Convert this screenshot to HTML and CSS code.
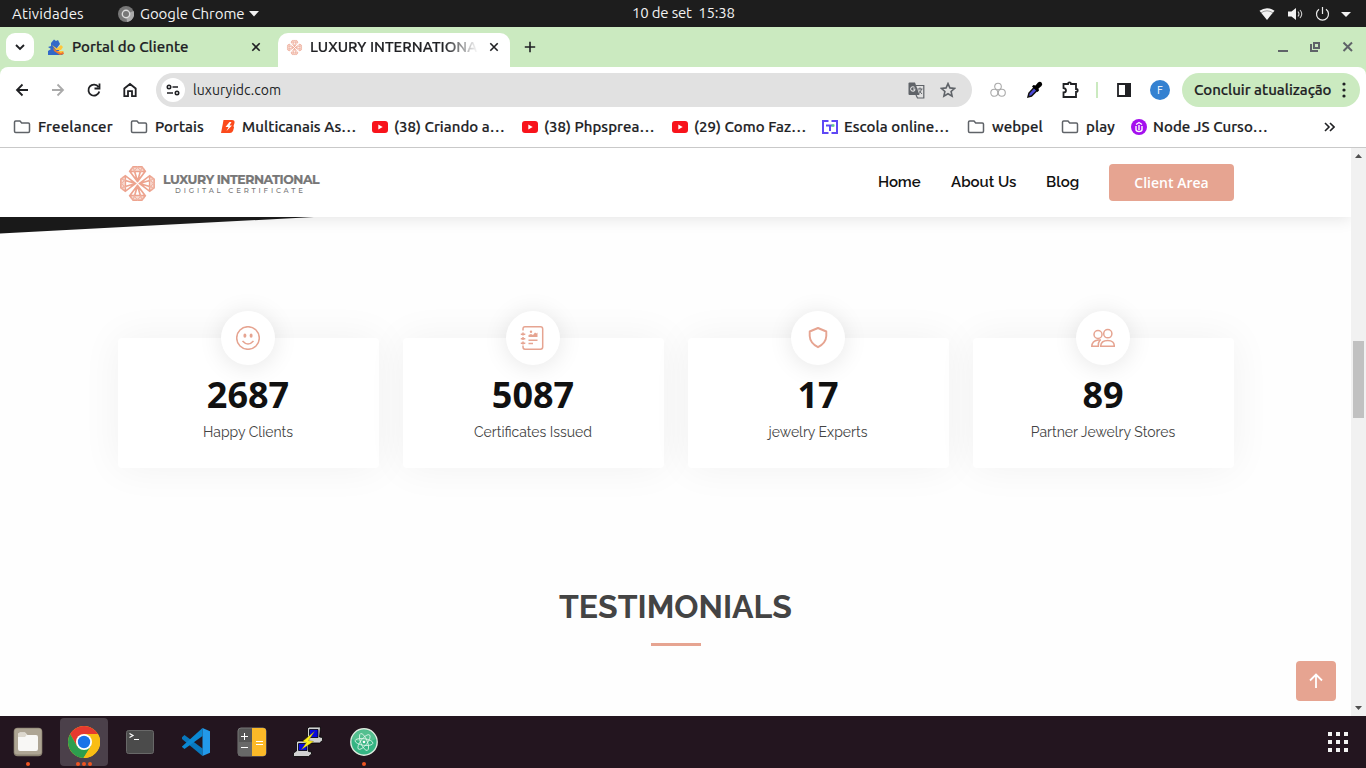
FILE: index.html
```
<!DOCTYPE html>
<html lang="pt-BR">
<head>
<meta charset="utf-8">
<title>Luxury International</title>
<link rel="stylesheet" href="styles.css">
</head>
<body>
<svg class="defs" width="0" height="0">
  <defs>
    <symbol id="folder" viewBox="0 0 18 14"><path d="M1.500 2.200Q1.500 1 2.700 1H7l1.700 2h6.600Q16.500 3 16.500 4.200V11.300Q16.500 12.500 15.300 12.500H2.700Q1.500 12.500 1.500 11.300Z" fill="none" stroke="#5f6368" stroke-width="1.500"/></symbol>
    <symbol id="yt" viewBox="0 0 16 12"><rect width="16" height="12" rx="3" fill="#f8131b"/><path d="M6.300 3.500v5l4.400-2.500z" fill="#fff"/></symbol>
    <symbol id="gem" viewBox="0 0 20 17"><path d="M5.500 1H14.500L18 5.500 10 16 2 5.500ZM2 5.500H18M7 5.500 10 16 13 5.500" fill="none" stroke="#eda38e" stroke-width="1.700"/><path d="M5.500 1 6.500 5.500 10 1 13.500 5.500 14.500 1M3 3.200h14" fill="none" stroke="#f0b5a4" stroke-width="1.100"/></symbol>
    <symbol id="flower" viewBox="0 0 40 40"><use href="#gem" x="10" y="2" width="20" height="17"/><use href="#gem" x="10" y="2" width="20" height="17" transform="rotate(90 20 20)"/><use href="#gem" x="10" y="2" width="20" height="17" transform="rotate(180 20 20)"/><use href="#gem" x="10" y="2" width="20" height="17" transform="rotate(270 20 20)"/></symbol>
    <symbol id="close" viewBox="0 0 10 10"><path d="M1.300 1.300 8.700 8.700M8.700 1.300 1.300 8.700" fill="none" stroke="currentColor" stroke-width="1.600"/></symbol>
  </defs>
</svg>

<header class="topbar">
  <span class="activities">Atividades</span>
  <svg class="app-mark" width="16" height="16" viewBox="0 0 16 16"><circle cx="8" cy="8" r="8" fill="#777"/><path d="M8 8 15.500 5A8 8 0 0 1 9 16Z" fill="#aaa"/><circle cx="8" cy="8" r="4.400" fill="#ddd"/><circle cx="8" cy="8" r="3" fill="#777"/></svg>
  <span class="app-name">Google Chrome</span>
  <svg class="app-caret" width="10" height="6" viewBox="0 0 10 6"><path d="M0 0h10L5 5.500z" fill="#f2f2f2"/></svg>
  <span class="clock">10 de set&nbsp; 15:38</span>
  <svg class="sys" width="92" height="16" viewBox="0 0 92 16"><path d="M.5 4.800Q8-.5 15.500 4.800L8 14Z" fill="#f2f2f2"/><path d="M2 6.800Q8 2.800 14 6.800" stroke="#888" fill="none" stroke-width=".8"/><path d="M29 5.500h3.500L37 2v12l-4.500-3.500h-3.500z" fill="#f2f2f2"/><path d="M39 5.500q2 2.500 0 5M41 4q3.500 4 0 8" fill="none" stroke="#ccc" stroke-width="1.100"/><path d="M60 3.200A6 6 0 1 0 67 3.200M63.500 1v7" fill="none" stroke="#eee" stroke-width="1.200"/><path d="M82 6h10l-5 5z" fill="#f2f2f2"/></svg>
</header>

<div class="tabs">
  <div class="tab-search"><svg width="10" height="7" viewBox="0 0 10 7"><path d="M1 1l4 4 4-4" fill="none" stroke="#202124" stroke-width="1.900"/></svg></div>
  <div class="tab tab-idle">
    <svg width="18" height="17" viewBox="0 0 18 17"><path d="M4 4 7 .5l2 1.500 2-1 2 4-3 4 6 7H1v-4l3-2-3-2 3-1z" fill="#3269c8"/><path d="M5 6l5 3.500 4-3.500 2 2-2 3H9z" fill="#ffc63b"/><path d="M6 9l4 3h6l1 3-4 1-6-4z" fill="#ee772d"/><path d="M10 12h7l-3 2z" fill="#ffc63b"/></svg>
    <span class="tab-title">Portal do Cliente</span>
    <svg class="x" width="10" height="10"><use href="#close"/></svg>
  </div>
  <div class="tab tab-active">
    <svg width="17" height="17"><use href="#flower"/></svg>
    <span class="tab-title">LUXURY INTERNATIONAL</span>
    <svg class="x" width="10" height="10"><use href="#close"/></svg>
  </div>
  <svg class="plus" width="12" height="12" viewBox="0 0 12 12"><path d="M6 .8v10.400M.8 6h10.400" stroke="#202124" stroke-width="1.600"/></svg>
  <svg class="winctl" width="78" height="14" viewBox="0 0 78 14"><g fill="none" stroke="#5f6368" stroke-width="2"><path d="M1 11h10M37 3h5v5h-5zM34 4v7h7"/><path d="M66.500 2.500l8.500 8.500M75 2.500l-8.500 8.500"/></g></svg>
</div>

<div class="toolbar">
  <svg class="nav" width="124" height="18" viewBox="0 0 124 18"><g fill="none" stroke="#202124" stroke-width="1.800"><path d="M14 9H3M8.500 3.500 3 9 8.500 14.500"/><path d="M38 9h11M43.500 3.500 49 9l-5.500 5.500" stroke="#aaa"/><path d="M84.500 6A5.500 5.500 0 1 0 85.300 10.500M85.500 2.500v5h-5"/><path d="M110.300 7.500 116 3l5.700 4.500V15.200h-3.700v-5h-4v5h-3.700z"/></g></svg>
  <div class="address">
    <span class="site"><svg width="14" height="12" viewBox="0 0 14 12"><g fill="none" stroke="#202124" stroke-width="1.600"><circle cx="3" cy="3" r="1.700"/><path d="M6.500 3H12M1 9h6"/><circle cx="11" cy="9" r="1.700"/></g></svg></span>
    <span class="url">luxuryidc.com</span>
    <svg class="translate" width="17" height="17" viewBox="0 0 17 17"><path d="M1.500 .5H7L11.500 13H1.500Q.5 13 .5 12V1.500Q.5 .5 1.500 .5Z" fill="#5f6368"/><path d="M8 3.500H15.800V16H9.500L8 13" fill="none" stroke="#5f6368" stroke-width="1.200"/><path d="M6.500 5.500A2.200 2.200 0 1 0 6.800 8V7H5" fill="none" stroke="#e1e1e1" stroke-width="1.100"/><path d="M9.500 7H14.500M12 5.500V7M13.500 7Q13 10 10.500 12M11 8.500l3 3.500" fill="none" stroke="#5f6368"/></svg>
    <svg width="16" height="16" viewBox="0 0 16 16"><path d="M8 1.600l1.900 4.300 4.700.5-3.500 3.100 1 4.700L8 11.800l-4.100 2.400 1-4.700L1.400 6.400l4.700-.5z" fill="none" stroke="#5f6368" stroke-width="1.600"/></svg>
  </div>
  <svg class="ext" width="180" height="20" viewBox="0 0 180 20"><g fill="none" stroke="#aaa" stroke-width="1.100"><circle cx="8" cy="6.500" r="3.300"/><circle cx="4.300" cy="12.800" r="3.500"/><circle cx="11.800" cy="12.800" r="3.500"/></g><path d="M38 17l1-4 5.500-6 3 3-6 6z" fill="#4b49d8" stroke="#111" stroke-width="1.500"/><path d="M43.500 5l2 .5 2.500-3q2-1.500 3.500 0t0 3.500l-3 2.500.5 2-1.500 1.500-5.500-5.500z" fill="#000"/><path d="M73.500 4H78q0-1.700 1.500-1.700T81 4h5v5q1.700 0 1.700 1.500T86 12v5H73.500v-4.500q2.500 0 2.500-2T73.500 8z" fill="none" stroke="#202124" stroke-width="1.800"/><path d="M107 2v16" stroke="#cbeac0" stroke-width="2"/><path d="M128 4h12v12h-12z" fill="none" stroke="#202124" stroke-width="1.800"/><path d="M135 3h6v14h-6z" fill="#202124"/><circle cx="170" cy="10" r="10" fill="#3481d1"/></svg>
  <span class="avatar-letter">F</span>
  <div class="update"><span>Concluir atualização</span><svg width="4" height="16" viewBox="0 0 4 16"><g fill="#202124"><circle cx="2" cy="2" r="1.600"/><circle cx="2" cy="8" r="1.600"/><circle cx="2" cy="14" r="1.600"/></g></svg></div>
</div>

<nav class="bookmarks">
  <div class="bm w117"><svg width="18" height="14"><use href="#folder"/></svg><span class="b1">Freelancer</span></div>
  <div class="bm w90"><svg width="18" height="14"><use href="#folder"/></svg><span>Portais</span></div>
  <div class="bm w151"><svg width="15" height="15" viewBox="0 0 15 15"><path d="M2.500 1H11Q14 1 13.500 4L12.500 7 13 8.500 12 12Q11 14 9 14H0l1-5 .8-4z" fill="#fb4a1c"/><path d="M8.500 3 4.500 8h3l-2 4 5.500-5.500H8.500l2-3.500z" fill="#fff"/></svg><span>Multicanais As…</span></div>
  <div class="bm w150"><svg width="16" height="12"><use href="#yt"/></svg><span>(38) Criando a…</span></div>
  <div class="bm w150"><svg width="16" height="12"><use href="#yt"/></svg><span>(38) Phpsprea…</span></div>
  <div class="bm w150"><svg width="16" height="12"><use href="#yt"/></svg><span>(29) Como Faz…</span></div>
  <div class="bm w145"><svg width="16" height="14" viewBox="0 0 16 14"><path d="M6.500 1H1v12h5.500M9.500 1H15v12H9.500" fill="none" stroke="#5f48f5" stroke-width="2"/><path d="M4 5.500h8M8 5v6" stroke="#5f48f5" stroke-width="2"/><path d="M9.500 4.500h3v2h-3z" fill="#58d681"/></svg><span>Escola online…</span></div>
  <div class="bm w94"><svg width="18" height="14"><use href="#folder"/></svg><span>webpel</span></div>
  <div class="bm w70"><svg width="18" height="14"><use href="#folder"/></svg><span>play</span></div>
  <div class="bm w194"><svg width="16" height="16" viewBox="0 0 16 16"><circle cx="8" cy="8" r="8" fill="#a410ee"/><path d="M5 7v3.500q0 2 3 2t3-2V7M8 11V6M5 5.500 8 3.500l3 2" fill="none" stroke="#fff" stroke-width="1.400"/></svg><span>Node JS Curso…</span></div>
  <svg width="11" height="10" viewBox="0 0 11 10"><path d="M1 1l4 4-4 4M6 1l4 4-4 4" fill="none" stroke="#202124" stroke-width="1.600"/></svg>
</nav>

<div class="view">
  <div class="page">
    <div class="site-header">
      <svg class="logo-mark" width="39" height="39"><use href="#flower"/></svg>
      <div class="logo-text"><span class="brand">LUXURY INTERNATIONAL</span><span class="sub">DIGITAL CERTIFICATE</span></div>
      <nav class="menu"><a class="m1">Home</a><a class="m2">About Us</a><a class="m3">Blog</a></nav>
      <a class="client">Client Area</a>
    </div>
    <svg class="wedge" width="1351" height="17" viewBox="0 0 1351 17"><path d="M0 0H314L0 16.500Z" fill="#191919"/></svg>
    <main class="counts">
      <div class="card"><div class="disc"><svg width="24" height="24" viewBox="0 0 24 24"><circle cx="12" cy="12" r="11.300" fill="none" stroke="#e6a491" stroke-width="1.500"/><ellipse cx="8.900" cy="9.700" rx="1.500" ry="2.100" fill="#e6a491"/><ellipse cx="15.100" cy="9.700" rx="1.500" ry="2.100" fill="#e6a491"/><path d="M6.500 15q5.500 6 11 0" fill="none" stroke="#e6a491" stroke-width="1.500"/></svg></div><strong>2687</strong><span>Happy Clients</span></div>
      <div class="card"><div class="disc"><svg class="book" width="24" height="24" viewBox="0 0 24 24"><g fill="none" stroke="#e6a491" stroke-width="1.500"><path d="M3 4.500V3Q3 .8 5 .8H20.500Q22.700 .8 22.700 3V21Q22.700 23.200 20.500 23.200H5Q3 23.200 3 21V19.500M3 6.500v3M3 11v3M3 15.500v3M.8 8.300h4.500M.8 12.800h4.500M.8 17.300h4.500"/><path d="M8.500 14.200h9M8.500 17.500h4.500"/></g><path d="M8.500 11V9l2.500-1 2 1 2-2.500 1.500 1 1-1V11z" fill="#e6a491"/><circle cx="11" cy="5.700" r="1.200" fill="#e6a491"/></svg></div><strong>5087</strong><span>Certificates Issued</span></div>
      <div class="card"><div class="disc"><svg width="24" height="24" viewBox="0 0 24 24"><path d="M12 2 20.300 5.500V10Q20 17 12 21.200 4 17 3.700 10V5.500Z" fill="none" stroke="#e6a491" stroke-width="1.900" stroke-linejoin="round"/></svg></div><strong>17</strong><span>jewelry Experts</span></div>
      <div class="card"><div class="disc"><svg width="24" height="24" viewBox="0 0 24 24"><g fill="none" stroke="#e6a491" stroke-width="1.500"><circle cx="7" cy="8.500" r="4"/><circle cx="16.800" cy="7.700" r="4.100"/><path d="M9.700 20.300V20Q10 14.500 16.700 14.500T23.300 20.300Z"/><path d="M10 14H7Q1 15 .8 20.300H7.300Q7 16.500 9 14"/></g></svg></div><strong>89</strong><span>Partner Jewelry Stores</span></div>
    </main>
    <section class="testimonials"><h2>TESTIMONIALS</h2><div class="rule"></div></section>
    <a class="to-top"><svg width="14" height="16" viewBox="0 0 14 16"><path d="M7 15V2M1 7.500 7 1.600l6 5.900" fill="none" stroke="#fff" stroke-width="1.800"/></svg></a>
  </div>
  <div class="scrollbar"><svg width="7" height="4" viewBox="0 0 7 4"><path d="M0 4 3.500 0 7 4z" fill="#505050"/></svg><div class="thumb"></div><svg width="7" height="4" viewBox="0 0 7 4"><path d="M0 0h7L3.500 4z" fill="#505050"/></svg></div>
</div>

<footer class="dock">
  <div class="app"><svg width="30" height="30" viewBox="0 0 30 30"><rect x=".7" y=".7" width="28.600" height="28.600" rx="4" fill="#8d8473"/><rect x="1.500" y="1.500" width="27" height="26" rx="3" fill="#aea594"/><path d="M5 8Q5 5.500 7 5.500H12L14.500 8H23Q25 8 25 10V22Q25 24 23 24H7Q5 24 5 22Z" fill="#f8f7f5"/><path d="M5 10V8Q5 5.500 7 5.500H12L14 7.500 12 10z" fill="#ddd8ce"/></svg><i></i></div>
  <div class="app current"><svg width="32" height="32" viewBox="0 0 32 32"><circle cx="16" cy="16" r="16" fill="#f9bd13"/><path d="M2.150 8A16 16 0 0 1 29.850 8H16L9 20Z" fill="#e6392f"/><path d="M2.150 8A16 16 0 0 0 15.500 32L23 20 9 20Z" fill="#2d9e4e"/><path d="M16 8H30A16 16 0 0 1 15.500 32L23 20Z" fill="#f9bd13"/><circle cx="16" cy="16" r="8" fill="#fff"/><circle cx="16" cy="16" r="6.200" fill="#1a73e8"/></svg><i></i><i></i><i></i></div>
  <div class="app"><svg class="term" width="28" height="24" viewBox="0 0 28 24"><rect x=".5" y=".5" width="27" height="23" rx="2" fill="#4b4b4b" stroke="#686868"/><path d="M3.500 3.500 7 5.500 3.500 7.500M8 9.500h5" fill="none" stroke="#fff" stroke-width="1.200"/></svg></div>
  <div class="app"><svg width="28" height="28" viewBox="0 0 28 28"><path d="M0 9.200 2.500 7 20.500 20.500V28L0 11z" fill="#0877bd"/><path d="M0 18.500 20.500 0V8L2.500 21 0 19z" fill="#0b88d3"/><path d="M20.500 0L28 3.200V24.800L20.500 28z" fill="#2299ea"/></svg></div>
  <div class="app"><svg width="30" height="30" viewBox="0 0 30 30"><rect x="1" y="1" width="28" height="28" rx="3" fill="#555" stroke="#777"/><path d="M1 15h14v14H3Q1 29 1 27z" fill="#686868"/><path d="M15 1H26Q29 1 29 4V26Q29 29 26 29H15Z" fill="#fbb928"/><path d="M4 9.500h7M7.500 6v7M4 20.500h7M19 14.500h7M19 17.500h7" stroke="#fff" stroke-width="1"/></svg></div>
  <div class="app"><svg width="31" height="31" viewBox="0 0 31 31"><g stroke="#000" stroke-width=".8"><path d="M15 1.500 17 .5h11l-1 10 3 .5v3l-3 2.500H15l-2-1V13l2-1z" fill="#d2d2d2"/><path d="M4 15.500 5.500 14.500H16V25l3 .5v2L16 30H1v-3.500l3-2z" fill="#d2d2d2"/><path d="M17 3h8.500v8H17zM6 17h8.500v7H6z" fill="#0808df"/><path d="M22 5 10 15l4 1-5 7 12-8-5-1z" fill="#ffef19" stroke="#776f00" stroke-width=".4"/></g></svg></div>
  <div class="app"><svg width="28" height="28" viewBox="0 0 28 28"><circle cx="14" cy="14" r="13.200" fill="#35b483" stroke="#ddeade" stroke-width="1.400"/><path d="M1.800 11A12.500 12.500 0 0 1 26 11Q14 17 1.800 11Z" fill="#69c697" opacity=".6"/><g fill="none" stroke="#dff5e9" stroke-width=".8"><ellipse cx="14" cy="14" rx="9" ry="3.300" transform="rotate(8 14 14)"/><ellipse cx="14" cy="14" rx="9" ry="3.300" transform="rotate(68 14 14)"/><ellipse cx="14" cy="14" rx="9" ry="3.300" transform="rotate(128 14 14)"/></g><circle cx="14" cy="14" r="1.300" fill="#fff"/></svg><i></i></div>
  <svg class="grid" width="20" height="20" viewBox="0 0 20 20"><path d="M0 2h20M0 10h20M0 18h20" stroke="#f3f3f3" stroke-width="4" stroke-dasharray="4"/></svg>
</footer>
</body>
</html>
```
FILE: styles.css
```
* { box-sizing: border-box; }
body { margin: 0; width: 1366px; height: 768px; overflow: hidden; display: flex; flex-direction: column; background: #fff; font-family: Ubuntu, "Noto Sans", sans-serif; font-size: 14px; color: #202124; }
svg { display: block; flex: none; }
.defs { position: absolute; }
span, a { white-space: nowrap; }

.topbar { position: relative; height: 27px; flex: none; background: #1d1d1d; color: #f2f2f2; display: flex; align-items: center; padding-left: 12px; font-size: 15px; }
.activities { width: 106px; letter-spacing: .15px; }
.app-name { margin-left: 6px; width: 108px; letter-spacing: -.05px; }
.clock { margin-left: 373px; width: 104px; letter-spacing: -.2px; padding-bottom: 2px; }
.app-caret { margin-left: 1px; }
.sys { margin-left: auto; margin-right: 15px; }

.tabs, .update, .bookmarks { font-size: 15px; font-weight: 500; -webkit-text-stroke: .2px; }
.tabs { height: 40px; flex: none; background: #cbeac0; display: flex; padding: 6px 11px 0 6px; }
.tab-search { width: 28px; height: 28px; border-radius: 9px; background: #fff; display: grid; place-items: center; }
.tab { display: flex; align-items: center; height: 28px; }
.tab-title { padding-bottom: 2px; }
.tab-idle { width: 244px; padding-left: 13px; }
.tab-idle .tab-title { margin-left: 7px; width: 179px; letter-spacing: .05px; }
.tab-active { width: 232px; height: 34px; padding: 0 0 6px 8px; background: #fff; border-radius: 10px 10px 0 0; }
.tab-active .tab-title { margin-left: 7px; width: 168px; overflow: hidden; margin-right: 11px; -webkit-mask-image: linear-gradient(90deg, #000 80%, transparent); mask-image: linear-gradient(90deg, #000 80%, transparent); }
.plus { margin: 8px 0 0 14px; }
.winctl { margin: 7px 0 0 auto; }

.toolbar { position: relative; height: 46px; flex: none; display: flex; align-items: center; padding-left: 14px; border-radius: 8px 8px 0 0; background: #fff; }
.toolbar::before { content: ""; position: absolute; z-index: -1; inset: 0 0 auto; height: 10px; background: #cbeac0; }
.address { margin-left: 18px; width: 816px; height: 34px; border-radius: 17px; background: #e1e1e1; display: flex; align-items: center; padding: 0 16px 0 5px; }
.site { width: 24px; height: 24px; border-radius: 50%; background: #fff; display: grid; place-items: center; }
.url { margin-left: 8px; letter-spacing: .05px; }
.translate { margin-left: auto; margin-right: 15px; }
.ext { margin-left: 18px; }
.avatar-letter { margin-left: -13px; width: 6px; color: #fff; font-size: 11px; position: relative; }
.update { margin-left: 19px; width: 178px; height: 34px; border-radius: 17px; background: #cbeac0; display: flex; align-items: center; padding: 0 14px 0 12px; justify-content: space-between; }
.update span { padding-bottom: 2px; }

.bookmarks { height: 35px; flex: none; display: flex; align-items: center; padding: 0 0 7px 13px; border-bottom: 1px solid #c9c9c9; letter-spacing: .05px; }
.bm { display: flex; align-items: center; gap: 6px; flex: none; }
.bm svg[width="18"] + span { margin-left: 1px; }
.b1 { letter-spacing: .2px; }
.w117 { width: 117px; } .w90 { width: 91px; } .w151 { width: 151px; }
.w150 { width: 150px; } .w145 { width: 145px; } .w94 { width: 94px; } .w70 { width: 70px; } .w194 { width: 193px; }

.view { flex: 1; display: flex; min-height: 0; }
.page { position: relative; width: 1351px; overflow: hidden; background: #fefefe; font-family: Raleway, Lato, sans-serif; }
.site-header { position: relative; z-index: 2; height: 69px; background: #fff; display: flex; align-items: center; padding: 0 117px 0 118px; box-shadow: 0 2px 15px rgba(0,0,0,.1); }
.logo-mark { margin-top: 1px; }
.logo-text { display: flex; flex-direction: column; margin: 3px 0 0 6px; width: 155px; color: #777; font-family: Montserrat, Inter, sans-serif; }
.brand { font-size: 12.500px; font-weight: 700; line-height: 12px; letter-spacing: -.45px; -webkit-text-stroke: .2px; }
.sub { font-size: 7px; line-height: 9px; letter-spacing: 2.850px; padding-left: 12px; font-weight: 500; }
.menu { margin-left: auto; display: flex; font-size: 15px; font-weight: 600; color: #111; padding-bottom: 2px; }
.m1 { width: 73px; letter-spacing: -.1px; } .m2 { width: 95px; } .m3 { width: 63px; }
.client { width: 125px; height: 37px; border-radius: 4px; background: #e6a491; color: #fff; display: grid; place-items: center; font: 600 14px "Open Sans", sans-serif; }
.wedge { position: relative; z-index: 3; }
.counts { display: grid; grid-template-columns: repeat(4, 261px); gap: 24px; padding: 104px 0 0 118px; }
.card { height: 130px; padding-right: 1px; background: #fff; border-radius: 4px; box-shadow: 0 0 40px rgba(0,0,0,.055); display: flex; flex-direction: column; align-items: center; }
.disc { width: 54px; height: 54px; margin-top: -27px; border-radius: 50%; background: #fff; box-shadow: 0 2px 25px rgba(0,0,0,.1); display: grid; place-items: center; }
.book { margin-right: 2px; }
.card strong { font: 700 36px/48px "Open Sans", sans-serif; margin-top: 6px; color: #111; }
.card span { font-size: 14px; line-height: 20px; margin-top: 3px; color: #444; }
.testimonials { display: flex; flex-direction: column; align-items: center; padding-top: 119px; }
h2 { margin: 0; font-size: 32px; line-height: 40px; color: #444; font-weight: 700; }
.rule { width: 50px; height: 3px; background: #e6a491; margin-top: 16px; }
.to-top { position: absolute; right: 15px; bottom: 15px; width: 40px; height: 40px; border-radius: 4px; background: #e6a491; display: grid; place-items: center; }
.scrollbar { width: 15px; background: #f1f1f1; display: flex; flex-direction: column; align-items: center; padding: 6px 0; }
.thumb { width: 11px; height: 77px; margin: 183px 0 auto; background: #c1c1c1; }

.dock { height: 52px; flex: none; background: #23151f; display: flex; align-items: center; padding: 0 18px 0 4px; gap: 8px; }
.app { position: relative; width: 48px; height: 48px; border-radius: 4px; display: flex; align-items: flex-end; justify-content: center; gap: 2px; }
.app svg { position: absolute; top: 50%; left: 50%; transform: translate(-50%, -50%); }
.current { background: #4b404a; }
.app i { width: 4px; height: 4px; border-radius: 50%; background: #ee5421; }
.grid { margin-left: auto; }
```
